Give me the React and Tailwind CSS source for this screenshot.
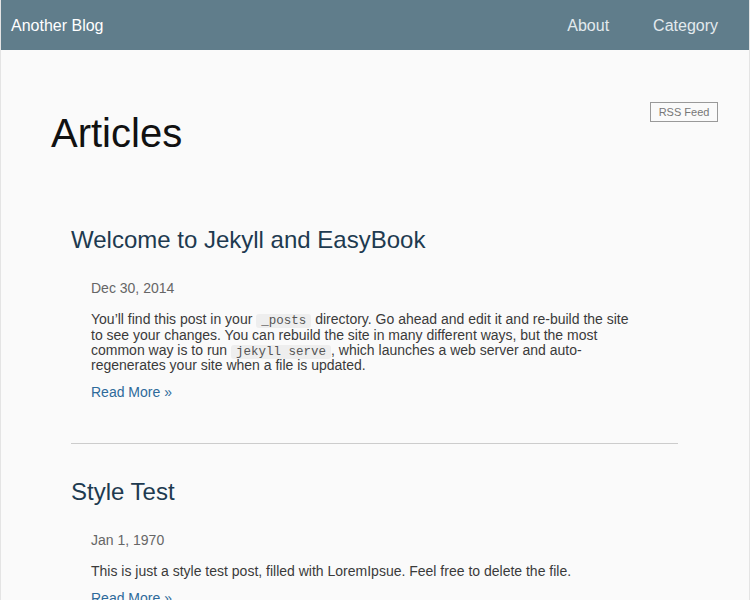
import React from 'react';

const posts = [
  {
    title: 'Welcome to Jekyll and EasyBook',
    date: 'Dec 30, 2014',
    body: (
      <>
        You’ll find this post in your <Code>_posts</Code> directory. Go ahead and edit it and re-build the site
        to see your changes. You can rebuild the site in many different ways, but the most common way is to run{' '}
        <Code>jekyll serve</Code>, which launches a web server and auto-regenerates your site when a file is updated.
      </>
    ),
  },
  {
    title: 'Style Test',
    date: 'Jan 1, 1970',
    body: <>This is just a style test post, filled with LoremIpsue. Feel free to delete the file.</>,
  },
];

function Code({ children }) {
  return (
    <code className="bg-[#eeeeee] text-[#555] px-[5px] rounded-[3px] text-[12.5px] leading-none font-['Liberation_Mono',monospace]">
      {children}
    </code>
  );
}

const App = () => {
  return (
    <div className="min-h-[600px] w-[750px] bg-[#fafafa] border-x border-b border-[#e4e4e4] font-['Liberation_Sans',Arial,sans-serif]">
      <nav className="h-[50px] bg-[#607d8b] flex items-center justify-between pl-[10px] pr-[31px]">
        <a className="text-white text-[16px] pt-[2px]">Another Blog</a>
        <div className="flex items-center gap-[44px] text-[16px] text-[#e3eaee] pt-[2px]">
          <a>About</a>
          <a>Category</a>
        </div>
      </nav>

      <main className="pl-[50px] pr-[31px] pt-[52px]">
        <div className="flex items-start justify-between">
          <h1 className="mt-[8px] text-[40px] leading-[46px] text-[#111]">Articles</h1>
          <a className="h-[20px] w-[68px] border border-[#999] text-[11px] text-[#777] flex items-center justify-center">
            RSS Feed
          </a>
        </div>

        <div className="pl-[20px] pr-[40px]">
          {posts.map((p, i) => (
            <article key={p.title} className={i === 0 ? 'mt-[70px] pb-[41px] border-b border-[#cccccc]' : 'mt-[34px]'}>
              <h2 className="text-[24px] leading-[28px] text-[#1e3a50]">{p.title}</h2>
              <div className="pl-[20px] pr-[40px]">
                <p className="mt-[24px] text-[14px] leading-[20px] text-[#666]">{p.date}</p>
                <p className="mt-[14px] text-[14px] leading-[15px] text-[#3a3a3a]">{p.body}</p>
                <a className="block mt-[9px] text-[14px] leading-[20px] text-[#2e6a9a]">Read More »</a>
              </div>
            </article>
          ))}
        </div>
      </main>
    </div>
  );
};

export default App;
